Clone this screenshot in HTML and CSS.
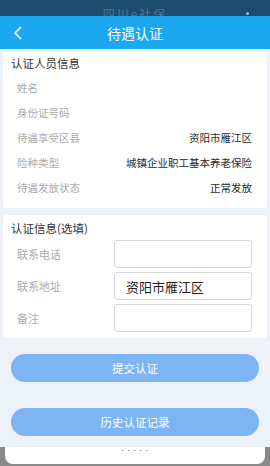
FILE: index.html
```html
<!DOCTYPE html>
<html lang="zh-CN">
<head>
    <meta charset="UTF-8">
    <meta name="viewport" content="width=device-width, initial-scale=1.0">
    <title>待遇认证</title>
    <link rel="stylesheet" href="styles.css">
</head>
<body>
    <div class="status-bar">
        <span class="status-title">四川e社保</span>
        <span class="status-dot"></span>
    </div>
    <div class="nav-bar">
        <svg class="back" width="10" height="14" viewBox="0 0 10 14">
            <path d="M8 1 L2 7 L8 13" fill="none" stroke="#fff" stroke-width="1.6"/>
        </svg>
        <span class="nav-title">待遇认证</span>
    </div>

    <div class="page">
        <!-- person info -->
        <div class="card">
            <div class="card-title">认证人员信息</div>
            <div class="info-row"><span class="label">姓名</span><span class="value"></span></div>
            <div class="info-row"><span class="label">身份证号码</span><span class="value"></span></div>
            <div class="info-row"><span class="label">待遇享受区县</span><span class="value">资阳市雁江区</span></div>
            <div class="info-row"><span class="label">险种类型</span><span class="value">城镇企业职工基本养老保险</span></div>
            <div class="info-row"><span class="label">待遇发放状态</span><span class="value">正常发放</span></div>
        </div>

        <!-- optional info -->
        <div class="card card-form">
            <div class="card-title">认证信息(选填)</div>
            <div class="form-row">
                <label for="phone">联系电话</label>
                <input type="text" id="phone">
            </div>
            <div class="form-row">
                <label for="addr">联系地址</label>
                <input type="text" id="addr" value="资阳市雁江区">
            </div>
            <div class="form-row">
                <label for="note">备注</label>
                <input type="text" id="note">
            </div>
        </div>

        <button class="btn btn-submit">提交认证</button>
        <button class="btn btn-history">历史认证记录</button>
    </div>

    <div class="bottom-frame">
        <div class="bottom-sheet"><span class="dots">•••••</span></div>
    </div>
</body>
</html>
```

FILE: styles.css
```css
body {
    margin: 0;
    width: 270px;
    height: 466px;
    overflow: hidden;
    background-color: #edf1f8;
    font-family: "Noto Sans CJK SC", "Noto Sans", sans-serif;
}

.status-bar {
    height: 16px;
    background-color: #1c4c6f;
    position: relative;
    overflow: hidden;
    text-align: center;
}

.status-title {
    display: inline-block;
    margin-top: 5px;
    color: #4f7592;
    font-size: 12px;
    line-height: 12px;
    letter-spacing: 2px;
}

.status-dot {
    position: absolute;
    right: 21px;
    top: 12px;
    width: 3px;
    height: 3px;
    border-radius: 50%;
    background-color: #9fb9cc;
}

.nav-bar {
    height: 33px;
    background-color: #1ba8f0;
    display: flex;
    align-items: center;
    position: relative;
    border-bottom: 2px solid #e3f3fc;
}

.back {
    position: absolute;
    left: 13px;
    top: 10px;
}

.nav-title {
    flex: 1;
    text-align: center;
    color: #fff;
    font-size: 14px;
}

.page {
    padding: 1px 3px 0;
}

.card {
    background-color: #fff;
    border-radius: 3px;
    padding: 3px 15px 8px 8px;
}

.card-title {
    font-size: 11.5px;
    color: #333;
    line-height: 16px;
    margin-bottom: 4px;
}

.info-row {
    display: flex;
    justify-content: space-between;
    align-items: center;
    height: 25px;
    padding-left: 6px;
    font-size: 10.5px;
}

.label {
    color: #aaa;
}

.value {
    color: #2a2a2a;
}

.card-form {
    margin-top: 7px;
    padding-top: 5px;
    padding-bottom: 6px;
}

.form-row {
    display: flex;
    align-items: center;
    padding-left: 6px;
    margin-bottom: 4px;
}

.form-row:last-child {
    margin-bottom: 0;
}

.form-row label {
    width: 97px;
    font-size: 11px;
    color: #aaa;
}

.form-row input {
    width: 138px;
    height: 28px;
    box-sizing: border-box;
    border: 1px solid #d6d6d6;
    border-radius: 3px;
    padding: 0 11px;
    font-family: inherit;
    font-size: 13px;
    color: #222;
    outline: none;
}

.btn {
    display: block;
    width: 248px;
    height: 28px;
    margin: 0 auto;
    border: none;
    border-radius: 14px;
    background-color: #7db4f4;
    color: #fff;
    font-family: inherit;
    font-size: 11.5px;
}

.btn-submit {
    margin-top: 16px;
}

.btn-history {
    margin-top: 26px;
}

.bottom-frame {
    position: absolute;
    left: 0;
    top: 447px;
    width: 270px;
    height: 19px;
    background-color: #8a8a8a;
    padding: 0 5px 2px;
    box-sizing: border-box;
}

.bottom-sheet {
    height: 17px;
    background-color: #fff;
    border-radius: 0 0 8px 8px;
    text-align: center;
}

.dots {
    font-size: 5px;
    color: #555;
    letter-spacing: 1px;
    line-height: 5px;
    vertical-align: top;
}
```
